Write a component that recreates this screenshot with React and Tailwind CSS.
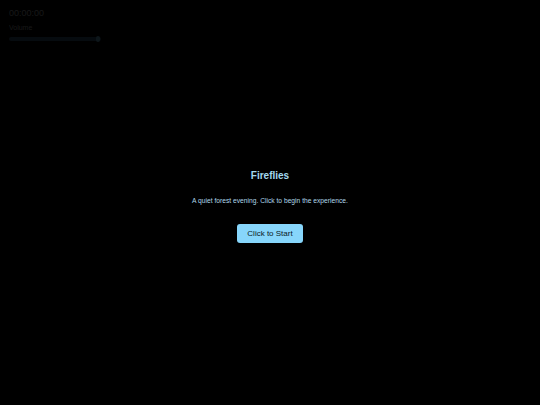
export default function App() {
  return (
    <div className="relative h-screen w-full overflow-hidden bg-black" style={{ fontFamily: '"Liberation Sans", Arial, sans-serif' }}>
      {/* HUD, barely visible before start */}
      <div className="absolute left-[9px] top-[8px] flex flex-col opacity-10">
        <div className="text-[9px] leading-[11px] text-[#d1d5db]">00:00:00</div>
        <div className="mt-[4px] text-[7px] leading-[9px] text-[#d1d5db]">Volume</div>
        <div className="relative mt-[5px] h-[4px] w-[92px] rounded-full bg-[#3b6a8f]">
          <div className="absolute right-[1px] top-[-1px] h-[6px] w-[4px] rounded-full bg-[#7dd3fc]" />
        </div>
      </div>

      <div className="flex h-full flex-col items-center justify-center pt-[7px]">
        <h1 className="text-[10px] font-bold leading-[13px] text-[#a4d8ef]">Fireflies</h1>
        <p className="mt-[14px] text-[6.7px] leading-[9px] text-[#b0d8ea]">A quiet forest evening. Click to begin the experience.</p>
        <button className="mt-[19px] h-[19px] rounded-[3px] bg-[#87d6fb] px-[10px] text-[8px] text-[#0b1a24]">
          Click to Start
        </button>
      </div>
    </div>
  );
}
